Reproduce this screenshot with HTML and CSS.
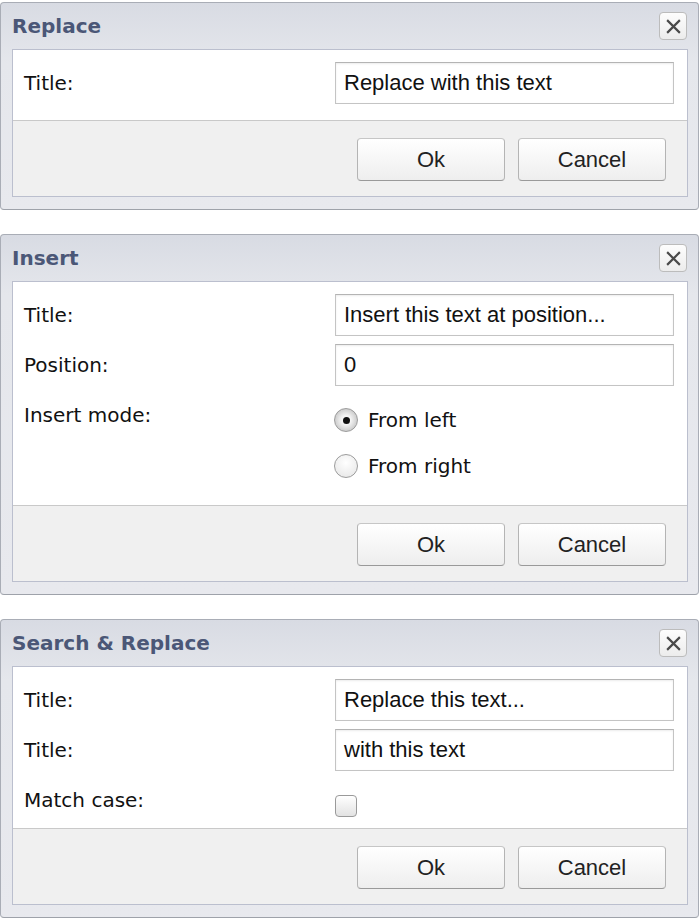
FILE: index.html
```html
<!DOCTYPE html>
<html>
<head>
<meta charset="utf-8">
<link rel="stylesheet" href="styles.css">
</head>
<body>
<div class="dialog">
  <div class="dialog-head">
    <span class="dialog-title">Replace</span>
    <span class="close"><svg viewBox="0 0 16 16" width="17" height="17"><path d="M2 2L14 14M14 2L2 14" stroke="#4a4a4a" stroke-width="2" fill="none"/></svg></span>
  </div>
  <div class="panel">
    <div class="form">
      <div class="row">
        <span class="label">Title:</span>
        <div class="field"><div class="input">Replace with this text</div></div>
      </div>
    </div>
    <div class="footer">
      <span class="btn">Ok</span>
      <span class="btn">Cancel</span>
    </div>
  </div>
</div>

<div class="dialog">
  <div class="dialog-head">
    <span class="dialog-title">Insert</span>
    <span class="close"><svg viewBox="0 0 16 16" width="17" height="17"><path d="M2 2L14 14M14 2L2 14" stroke="#4a4a4a" stroke-width="2" fill="none"/></svg></span>
  </div>
  <div class="panel">
    <div class="form">
      <div class="row">
        <span class="label">Title:</span>
        <div class="field"><div class="input">Insert this text at position...</div></div>
      </div>
      <div class="row">
        <span class="label">Position:</span>
        <div class="field"><div class="input">0</div></div>
      </div>
      <div class="row">
        <span class="label">Insert mode:</span>
        <div class="field radios">
          <div class="radio-item"><span class="radio checked"></span><span class="radio-text">From left</span></div>
          <div class="radio-item"><span class="radio"></span><span class="radio-text">From right</span></div>
        </div>
      </div>
    </div>
    <div class="footer">
      <span class="btn">Ok</span>
      <span class="btn">Cancel</span>
    </div>
  </div>
</div>

<div class="dialog">
  <div class="dialog-head">
    <span class="dialog-title">Search &amp; Replace</span>
    <span class="close"><svg viewBox="0 0 16 16" width="17" height="17"><path d="M2 2L14 14M14 2L2 14" stroke="#4a4a4a" stroke-width="2" fill="none"/></svg></span>
  </div>
  <div class="panel">
    <div class="form">
      <div class="row">
        <span class="label">Title:</span>
        <div class="field"><div class="input">Replace this text...</div></div>
      </div>
      <div class="row">
        <span class="label">Title:</span>
        <div class="field"><div class="input">with this text</div></div>
      </div>
      <div class="row">
        <span class="label">Match case:</span>
        <div class="field check-field"><span class="checkbox"></span></div>
      </div>
    </div>
    <div class="footer">
      <span class="btn">Ok</span>
      <span class="btn">Cancel</span>
    </div>
  </div>
</div>
</body>
</html>
```

FILE: styles.css
```css
html, body {
  margin: 0;
  padding: 0;
  background: #ffffff;
}
body {
  padding: 2px 0 0 0;
  font-family: "DejaVu Sans", Verdana, sans-serif;
}
.dialog {
  width: 699px;
  box-sizing: border-box;
  border: 1px solid #a9adb6;
  border-bottom-color: #9ea2aa;
  border-radius: 4px;
  background: linear-gradient(#d8dbe3, #e5e7ec 60px, #e8e9ee);
  margin-bottom: 24px;
}
.dialog + .dialog + .dialog {
  margin-top: 1px;
}
.dialog-head {
  height: 46px;
  display: flex;
  align-items: center;
  justify-content: space-between;
  padding: 0 11px 0 11px;
}
.dialog-title {
  font-weight: bold;
  font-size: 20px;
  color: #4b5777;
}
.close {
  width: 26px;
  height: 26px;
  border: 1px solid #bcbcbc;
  border-radius: 4px;
  background: linear-gradient(#fdfdfd, #ececec);
  display: flex;
  align-items: center;
  justify-content: center;
}
.panel {
  margin: 0 10px 12px 11px;
  border: 1px solid #bbbfce;
  background: #f0f0f0;
}
.form {
  background: #ffffff;
  padding: 12px 13px 16px 11px;
  display: flex;
  flex-direction: column;
  gap: 8px;
}
.row {
  display: flex;
  align-items: flex-start;
}
.label {
  flex: 1;
  font-size: 20px;
  line-height: 24px;
  padding-top: 9px;
  color: #111;
}
.field {
  width: 339px;
}
.input {
  height: 42px;
  box-sizing: border-box;
  border: 1px solid #c4c4c4;
  border-top-color: #b4b4b4;
  box-shadow: inset 0 1px 2px rgba(0,0,0,0.08);
  background: #fff;
  font-family: "Liberation Sans", Arial, sans-serif;
  font-size: 22px;
  line-height: 40px;
  padding-left: 8px;
  color: #111;
}
.radios {
  display: flex;
  flex-direction: column;
  padding-top: 3px;
}
.radio-item {
  height: 46px;
  display: flex;
  align-items: center;
  gap: 10px;
  margin-left: -1px;
}
.radio {
  width: 24px;
  height: 24px;
  box-sizing: border-box;
  border-radius: 50%;
  border: 1px solid #9c9c9c;
  background: radial-gradient(circle at 50% 35%, #ffffff, #e4e4e4);
  display: flex;
  align-items: center;
  justify-content: center;
}
.radio.checked {
  background: radial-gradient(circle at 50% 50%, #f4f4f4 30%, #c9c9c9 75%, #b5b5b5);
}
.radio.checked::after {
  content: "";
  width: 7px;
  height: 7px;
  border-radius: 50%;
  background: #111;
}
.radio-text {
  font-size: 20px;
  color: #111;
}
.check-field {
  height: 33px;
  padding-top: 16px;
  box-sizing: border-box;
}
.checkbox {
  display: block;
  width: 22px;
  height: 22px;
  box-sizing: border-box;
  border: 1px solid #9a9a9a;
  border-radius: 4px;
  background: linear-gradient(#ffffff, #e2e2e2);
}
.footer {
  border-top: 1px solid #c9c9c9;
  padding: 17px 21px 15px 0;
  display: flex;
  justify-content: flex-end;
  gap: 13px;
}
.btn {
  width: 148px;
  height: 43px;
  box-sizing: border-box;
  border: 1px solid #b4b4b4;
  border-top-color: #c6c6c6;
  border-bottom-color: #9a9a9a;
  border-radius: 4px;
  background: linear-gradient(#ffffff, #eeeeee);
  font-family: "Liberation Sans", Arial, sans-serif;
  font-size: 22px;
  color: #222;
  display: flex;
  align-items: center;
  justify-content: center;
}
```
